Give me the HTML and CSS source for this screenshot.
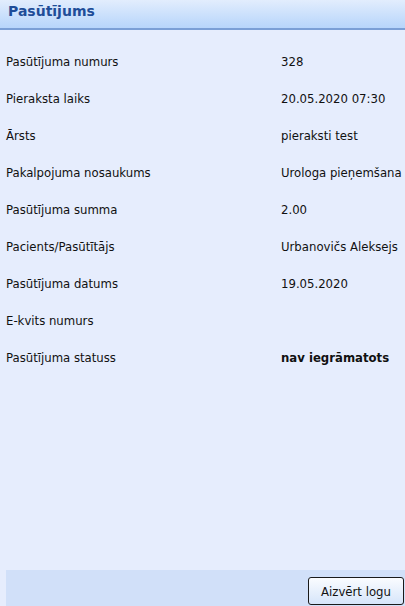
FILE: index.html
```html
<!DOCTYPE html>
<html lang="lv">
<head>
<meta charset="utf-8">
<title>Pasūtījums</title>
<link rel="stylesheet" href="styles.css">
</head>
<body>
<div class="window">
  <div class="header">Pasūtījums</div>
  <div class="content">
    <div class="row"><span class="label">Pasūtījuma numurs</span><span class="value">328</span></div>
    <div class="row"><span class="label">Pieraksta laiks</span><span class="value">20.05.2020 07:30</span></div>
    <div class="row"><span class="label">Ārsts</span><span class="value">pieraksti test</span></div>
    <div class="row"><span class="label">Pakalpojuma nosaukums</span><span class="value">Urologa pieņemšana</span></div>
    <div class="row"><span class="label">Pasūtījuma summa</span><span class="value">2.00</span></div>
    <div class="row"><span class="label">Pacients/Pasūtītājs</span><span class="value">Urbanovičs Aleksejs</span></div>
    <div class="row"><span class="label">Pasūtījuma datums</span><span class="value">19.05.2020</span></div>
    <div class="row"><span class="label">E-kvits numurs</span><span class="value"></span></div>
    <div class="row"><span class="label">Pasūtījuma statuss</span><span class="value strong">nav iegrāmatots</span></div>
  </div>
  <div class="footer">
    <button class="btn" type="button">Aizvērt logu</button>
  </div>
</div>
</body>
</html>
```
FILE: styles.css
```css
html, body {
  margin: 0;
  padding: 0;
  height: 100%;
}
body {
  background: #e6edfd;
  font-family: "DejaVu Sans Condensed", "DejaVu Sans", sans-serif;
  font-size: 13px;
  color: #111;
  overflow: hidden;
}
.window {
  display: flex;
  flex-direction: column;
  height: 606px;
}
.header {
  height: 30px;
  box-sizing: border-box;
  padding: 3px 0 0 8px;
  background: linear-gradient(#e2edfd, #b7d5fb);
  border-bottom: 2px solid #7b9fd6;
  font-family: "DejaVu Sans", sans-serif;
  font-weight: bold;
  font-size: 14px;
  color: #1f4d98;
}
.content {
  flex: 1;
  padding-top: 24px;
  padding-left: 6px;
}
.row {
  display: flex;
  height: 37px;
  line-height: 16px;
}
.label {
  width: 275px;
}
.strong {
  font-weight: bold;
}
.footer {
  margin-left: 6px;
  height: 36px;
  background: #d1e0f9;
  display: flex;
  justify-content: flex-end;
  align-items: flex-end;
  padding-bottom: 1px;
  box-sizing: border-box;
}
.btn {
  width: 96px;
  height: 28px;
  margin-right: 1px;
  border: 1px solid #1a1a1a;
  border-radius: 3px;
  background: linear-gradient(#fafcff, #d6e5fa);
  font-family: "DejaVu Sans Condensed", "DejaVu Sans", sans-serif;
  font-size: 13px;
  color: #111;
  padding: 0;
}
```
